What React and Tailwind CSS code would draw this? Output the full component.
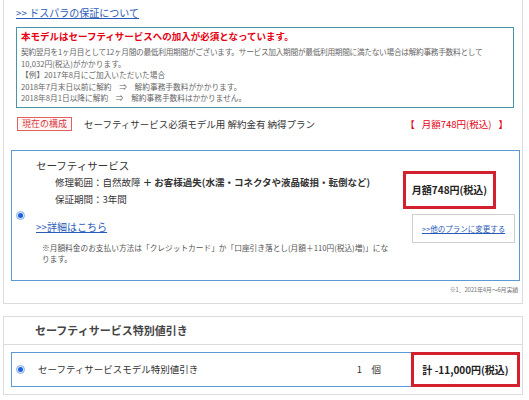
import React from "react";

const Radio = () => (
  <span className="inline-flex w-[9px] h-[9px] rounded-full border border-[#8fb2e6] bg-[#dce8fb] items-center justify-center shrink-0">
    <span className="w-[5px] h-[5px] rounded-full bg-[#1d63dd]" />
  </span>
);

export default function App() {
  return (
    <div className="w-[529px] min-h-[400px] bg-white text-[#333] font-['Noto_Sans_CJK_JP','Noto_Sans',sans-serif]">
      {/* 保証プラン */}
      <div className="ml-[3px] w-[520px] border border-t-0 border-[#dcdcdc] pt-[6px] pb-[7px]">
        <a href="#" className="block ml-[12px] w-fit text-[10px] leading-[14px] text-[#2a5ab8] underline">
          &gt;&gt; ドスパラの保証について
        </a>

        <div className="ml-[12px] mt-[7px] w-[498px] border-[1px] border-[rgb(70,150,165)] px-[4px] pt-[1px] pb-[3px]">
          <p className="text-[9.5px] leading-[14px] font-bold text-[#e60012] whitespace-nowrap">
            本モデルはセーフティサービスへの加入が必須となっています。
          </p>
          <div className="mt-[3px] text-[7.7px] leading-[11.5px] text-[#666] whitespace-nowrap">
            <p className="tracking-[-0.3px]">
              契約翌月を1ヶ月目として12ヶ月間の最低利用期間がございます。サービス加入期間が最低利用期間に満たない場合は解約事務手数料として
            </p>
            <p>10,032円(税込)がかかります。</p>
            <p>【例】2017年8月にご加入いただいた場合</p>
            <p>2018年7月末日以前に解約　⇒　解約事務手数料がかかります。</p>
            <p>2018年8月1日以降に解約　⇒　解約事務手数料はかかりません。</p>
          </div>
        </div>

        <div className="mt-[9px] flex items-center">
          <span className="ml-[13px] w-[55px] h-[14px] flex items-center justify-center border border-[#e06060] bg-[#fff6f6] text-[9px] text-[#d9363e]">
            現在の構成
          </span>
          <span className="ml-[12px] text-[9.5px] text-[#333] whitespace-nowrap">
            セーフティサービス必須モデル用 解約金有 納得プラン
          </span>
          <span className="ml-auto mr-[14px] flex gap-[7px] text-[9.5px] text-[#e60012] whitespace-nowrap">
            <span>【</span>
            <span>月額748円(税込)</span>
            <span>】</span>
          </span>
        </div>

        <div className="ml-[7px] mt-[19px] w-[509px] h-[131px] flex border border-[#5b9bd5]">
          <div className="w-[24px] pl-[4px] flex items-center">
            <Radio />
          </div>
          <div className="w-[367px] pt-[7px] whitespace-nowrap">
            <p className="text-[10.5px] leading-[16.5px] text-[#333]">セーフティサービス</p>
            <p className="ml-[19px] text-[9.5px] leading-[16.5px] text-[#333]">
              修理範囲：自然故障 <span className="font-bold">＋ お客様過失(水濡・コネクタや液晶破損・転倒など)</span>
            </p>
            <p className="ml-[19px] text-[9.5px] leading-[16.5px] text-[#333]">保証期間：3年間</p>
            <a href="#" className="block w-fit mt-[13px] text-[10px] leading-[14px] text-[#2a5ab8] underline">
              &gt;&gt;詳細はこちら
            </a>
            <p className="ml-[6px] mt-[8px] text-[7.7px] leading-[11px] text-[#555]">
              ※月額料金のお支払い方法は「クレジットカード」か「口座引き落とし(月額＋110円(税込)増)」にな
              <br />
              ります。
            </p>
          </div>
          <div className="flex-1 pt-[20px]">
            <div className="w-[93px] h-[38px] border-[3px] border-[#d3202f] flex items-center justify-center text-[10px] font-bold text-[#222] whitespace-nowrap">
              月額748円(税込)
            </div>
            <div className="ml-[9px] mt-[5px] w-[103px] h-[29px] border border-[#cfcfcf] bg-white flex items-center justify-center">
              <a href="#" className="text-[7.5px] text-[#2a5ab8] underline whitespace-nowrap">
                &gt;&gt;他のプランに変更する
              </a>
            </div>
          </div>
        </div>

        <p className="mt-[3px] mr-[4px] text-right text-[6px] tracking-[-0.2px] leading-[12px] text-[#777]">
          ※1．2021年4月～6月実績
        </p>
      </div>

      {/* 特別値引き */}
      <div className="ml-[3px] mt-[12px] w-[520px] border border-[#dcdcdc] pb-[7px]">
        <div className="h-[28px] border-b border-[#dcdcdc] flex items-center pl-[31px]">
          <span className="text-[11px] font-bold text-[#444]">セーフティサービス特別値引き</span>
        </div>
        <div className="ml-[7px] mt-[7px] w-[509px] h-[35px] flex items-center border border-[#5b9bd5]">
          <div className="w-[24px] pl-[4px] flex items-center">
            <Radio />
          </div>
          <span className="ml-[2px] flex-1 text-[9.5px] text-[#333] whitespace-nowrap">
            セーフティサービスモデル特別値引き
          </span>
          <span className="mr-[30px] text-[9.5px] text-[#333] whitespace-nowrap">1　個</span>
          <div className="self-stretch -my-[1px] -mr-[1px] w-[109px] border-[3px] border-[#d3202f] flex items-center justify-center text-[10px] font-bold text-[#222] whitespace-nowrap">
            計 -11,000円(税込)
          </div>
        </div>
      </div>
    </div>
  );
}
